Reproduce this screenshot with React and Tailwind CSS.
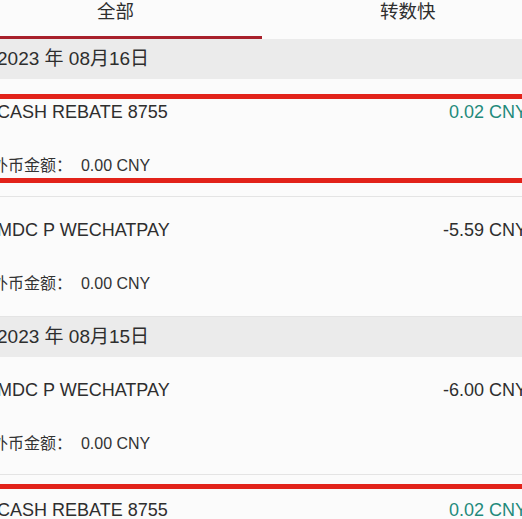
import React from 'react';

const font = { fontFamily: '"Liberation Sans", "Noto Sans CJK SC", sans-serif' };

const groups = [
  {
    date: '2023 年 08月16日',
    items: [
      { name: 'CASH REBATE 8755', amount: '0.02 CNY', positive: true, marks: [15, 99], h: 'h-[118px]' },
      { name: 'MDC P WECHATPAY', amount: '-5.59 CNY', h: 'h-[120px]' },
    ],
  },
  {
    date: '2023 年 08月15日',
    items: [
      { name: 'MDC P WECHATPAY', amount: '-6.00 CNY', h: 'h-[118px]' },
      { name: 'CASH REBATE 8755', amount: '0.02 CNY', positive: true, marks: [9], h: 'h-[118px]', pt: true },
    ],
  },
];

const Row = ({ item }) => (
  <div className={`relative flex flex-col border-b border-[#e4e4e4] bg-[#fbfbfb] ${item.h} ${item.pt ? 'pt-[23px]' : 'pt-[21px]'}`}>
    <div className="flex items-center justify-between leading-6 text-[18px] text-[#2e2e2e]">
      <span className="ml-[-3px]">{item.name}</span>
      <span className={`mr-[-5px] ${item.positive ? 'text-[#1f8a7b]' : 'text-[#2e2e2e]'}`}>{item.amount}</span>
    </div>
    <div className="mt-[31px] ml-[-8px] leading-[22px] text-[16px] text-[#333]">
      外币金额：&nbsp;&nbsp;0.00 CNY
    </div>
    {item.marks &&
      item.marks.map((top) => (
        <div
          key={top}
          className="pointer-events-none absolute left-0 right-0 h-[5px] bg-[#e2231a]"
          style={{ top }}
        />
      ))}
  </div>
);

export default function App() {
  return (
    <div className="h-[519px] w-[522px] overflow-hidden bg-[#fbfbfb]" style={font}>
      <div className="flex h-[36px] bg-[#fbfbfb] text-[18.5px] text-[#2e2e2e]">
        <div className="relative w-[262px]">
          <span className="absolute left-[97px] top-0 leading-6">全部</span>
        </div>
        <div className="relative flex-1">
          <span className="absolute left-[118px] top-0 leading-6">转数快</span>
        </div>
      </div>
      <div className="h-[3px] w-[262px] bg-[#a8202b]" />
      {groups.map((g) => (
        <div key={g.date}>
          <div className="flex h-[40px] items-center bg-[#ebebeb] text-[19px] text-[#2e2e2e]">
            <span className="ml-[-3px]">{g.date}</span>
          </div>
          {g.items.map((item, i) => (
            <Row key={i} item={item} />
          ))}
        </div>
      ))}
    </div>
  );
}
